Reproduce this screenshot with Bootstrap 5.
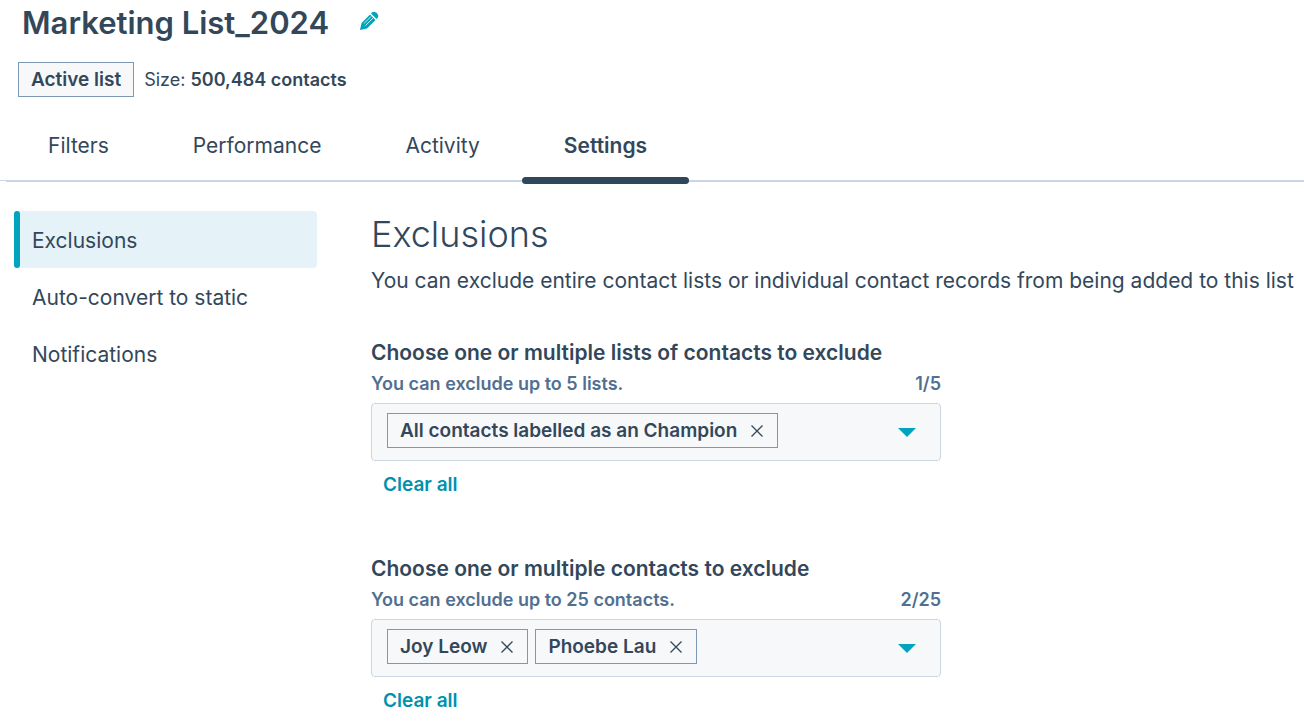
<!DOCTYPE html>
<html lang="en">
<head>
<meta charset="utf-8">
<meta name="viewport" content="width=device-width, initial-scale=1">
<title>Marketing List_2024</title>
<link href="https://cdn.jsdelivr.net/npm/bootstrap@5.3.0/dist/css/bootstrap.min.css" rel="stylesheet">
<style>
  :root { --ink: #33475b; --teal: #00a4bd; --slate: #516f90; --line: #cbd6e2; --edge: #7c98b6; --fog: #f7f8fa; }
  body { font-family: Inter, "Liberation Sans", sans-serif; font-size: 21px; line-height: 30px; color: var(--ink); }
  .plain { display: inline-flex; background: none; border: 0; padding: 0; color: inherit; }
  .title-row { gap: 30px; padding: 3px 22px 0; }
  .list-title { font-size: 31px; line-height: 40px; font-weight: 600; }
  .tag { display: inline-flex; align-items: center; background: var(--fog); border: 1px solid var(--edge); font-size: 19px; line-height: 33px; font-weight: 600; padding: 0 12px; }
  .meta { font-size: 18px; gap: 10px; padding: 19px 18px 0; }
  .tab-row { margin-top: 14px; padding-left: 6px; background: linear-gradient(var(--line), var(--line)) left bottom 1px / 6px 1px no-repeat; }
  .tabs { height: 71px; border-bottom: 2px solid var(--line); }
  .tabs .nav-link { position: relative; padding: 20px 42px; color: var(--ink); }
  .tabs .nav-link.active { font-weight: 600; }
  .tabs .nav-link.active::after { content: ""; position: absolute; left: 0; right: 0; bottom: -4px; height: 7px; border-radius: 4px; background: #2e475d; }
  .layout { padding: 29px 0 0 14px; }
  .side { width: 303px; margin-right: 54px; }
  .side .nav-link { position: relative; color: var(--ink); padding: 15px 18px 12px; border-radius: 4px; }
  .side .nav-link.active { background: #e5f3f8; }
  .side .nav-link.active::before { content: ""; position: absolute; left: 0; top: 0; bottom: 0; width: 6px; border-radius: 3px; background: var(--teal); }
  .section-title { font-size: 36px; line-height: 46px; font-weight: 300; margin-bottom: 9px; }
  .intro { margin-bottom: 42px; }
  .field { max-width: 570px; }
  .field + .field { margin-top: 55px; }
  .field-name { font-weight: 600; }
  .hint { font-size: 18px; line-height: 24px; font-weight: 600; color: var(--slate); margin: 4px 0 7px; }
  .picker { background: var(--fog); border: 1px solid var(--line); border-radius: 4px; padding: 9px 24px 12px 15px; gap: 7px; }
  .picker .tag { gap: 14px; padding-right: 14px; }
  .clear { font-size: 19px; line-height: 24px; font-weight: 600; color: #0091ae; margin: 12px 0 0 12px; }
</style>
</head>
<body>
<svg class="d-none" aria-hidden="true">
  <symbol id="cross" viewBox="0 0 12 12"><path d="M.5.5l11 11M11.5.5l-11 11" fill="none" stroke="#33475b" stroke-width="1.3"/></symbol>
  <symbol id="caret" viewBox="0 0 18 9"><path d="M0 0h18L9 9z" fill="#00a4bd"/></symbol>
</svg>
<header>
  <div class="title-row d-flex align-items-center">
    <h1 class="list-title mb-0">Marketing List_2024</h1>
    <button class="plain pb-1" type="button" aria-label="Rename list">
      <svg width="20" height="20" viewBox="0 0 20 20"><path fill="#00a4bd" d="M1 19l1.500-7L11 3.500l5.500 5.500L8 17.500zM12 2.500l1-1q1-1 2.500-.8 3 .8 3.800 3.800.2 1.500-.8 2.500l-1 1z"/><path stroke="#fff" stroke-width=".8" d="M5 12.500l7-7M6.500 14.500l7.500-7.500" fill="none"/></svg>
    </button>
  </div>
  <div class="meta d-flex align-items-center">
    <span class="tag">Active list</span>
    <span>Size: <b class="fw-semibold">500,484 contacts</b></span>
  </div>
  <div class="tab-row">
    <nav class="tabs nav flex-nowrap" aria-label="List sections">
      <a class="nav-link" href="#filters">Filters</a>
      <a class="nav-link" href="#performance">Performance</a>
      <a class="nav-link" href="#activity">Activity</a>
      <a class="nav-link active" aria-current="page" href="#settings">Settings</a>
    </nav>
  </div>
</header>
<div class="layout d-flex">
  <nav class="side nav flex-column flex-shrink-0" aria-label="Settings">
    <a class="nav-link active" aria-current="page" href="#exclusions">Exclusions</a>
    <a class="nav-link" href="#static">Auto-convert to static</a>
    <a class="nav-link" href="#notifications">Notifications</a>
  </nav>
  <main class="flex-grow-1" id="exclusions">
    <h2 class="section-title">Exclusions</h2>
    <p class="intro">You can exclude entire contact lists or individual contact records from being added to this list</p>
    <section class="field" role="group" aria-labelledby="lists-name">
      <div class="field-name" id="lists-name">Choose one or multiple lists of contacts to exclude</div>
      <div class="hint d-flex justify-content-between"><span>You can exclude up to 5 lists.</span><span>1/5</span></div>
      <div class="picker d-flex align-items-center">
        <span class="tag">All contacts labelled as an Champion
          <button class="plain" type="button" aria-label="Remove All contacts labelled as an Champion"><svg width="12" height="12"><use href="#cross"/></svg></button></span>
        <button class="plain ms-auto pt-1" type="button" aria-label="Show lists" aria-haspopup="listbox"><svg width="18" height="9"><use href="#caret"/></svg></button>
      </div>
      <button class="plain clear" type="button">Clear all</button>
    </section>
    <section class="field" role="group" aria-labelledby="contacts-name">
      <div class="field-name" id="contacts-name">Choose one or multiple contacts to exclude</div>
      <div class="hint d-flex justify-content-between"><span>You can exclude up to 25 contacts.</span><span>2/25</span></div>
      <div class="picker d-flex align-items-center">
        <span class="tag">Joy Leow
          <button class="plain" type="button" aria-label="Remove Joy Leow"><svg width="12" height="12"><use href="#cross"/></svg></button></span>
        <span class="tag">Phoebe Lau
          <button class="plain" type="button" aria-label="Remove Phoebe Lau"><svg width="12" height="12"><use href="#cross"/></svg></button></span>
        <button class="plain ms-auto pt-1" type="button" aria-label="Show contacts" aria-haspopup="listbox"><svg width="18" height="9"><use href="#caret"/></svg></button>
      </div>
      <button class="plain clear" type="button">Clear all</button>
    </section>
  </main>
</div>
<script src="https://cdn.jsdelivr.net/npm/bootstrap@5.3.0/dist/js/bootstrap.bundle.min.js"></script>
</body>
</html>
